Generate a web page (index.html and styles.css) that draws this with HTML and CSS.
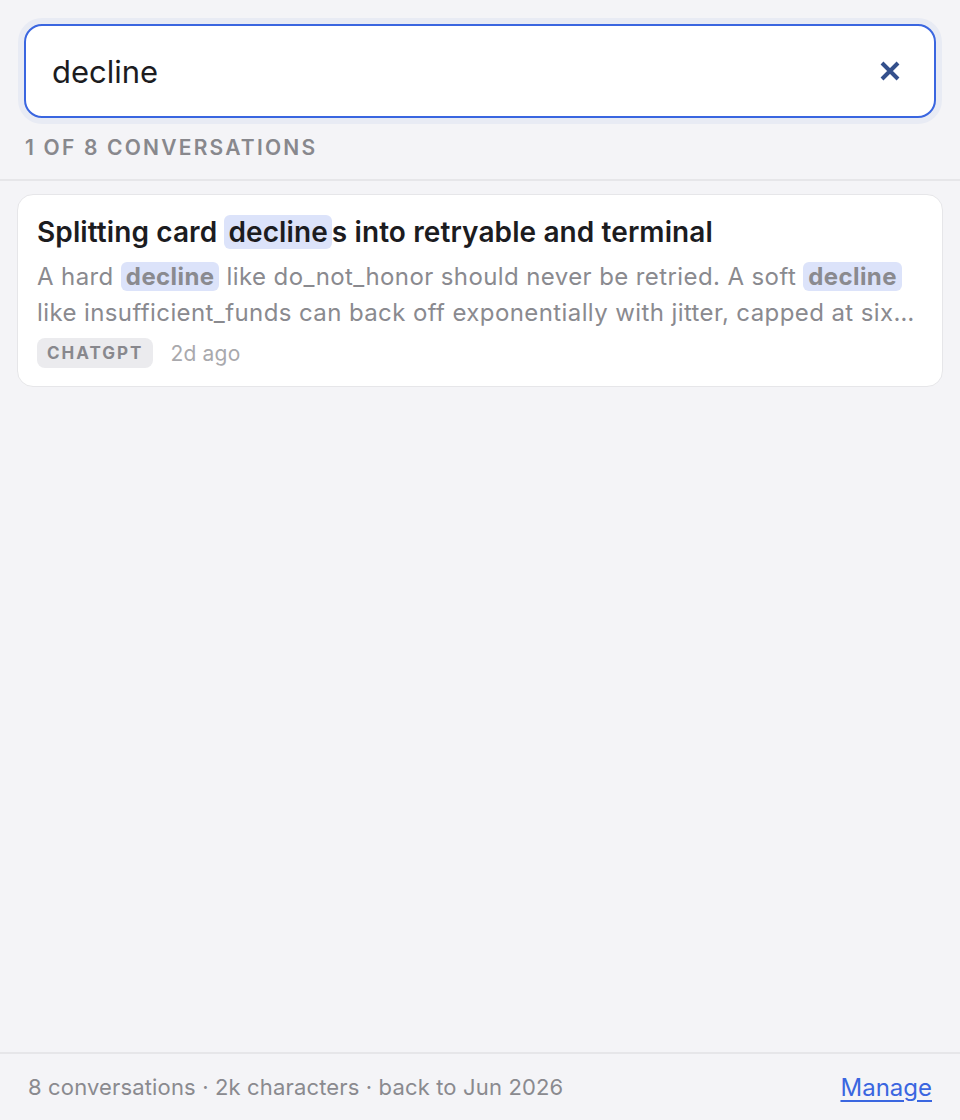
FILE: index.html
```html
<!DOCTYPE html>
<html lang="en">
<head>
<meta charset="utf-8">
<title>Search conversations</title>
<link rel="stylesheet" href="styles.css">
</head>
<body>
<div class="app">
  <header class="header">
    <div class="search">
      <span class="search-text">decline</span>
      <button class="clear" aria-label="Clear search">
        <svg width="22" height="22" viewBox="0 0 22 22"><path d="M3 3 L19 19 M19 3 L3 19" stroke="#34508c" stroke-width="4" stroke-linecap="butt" fill="none"/></svg>
      </button>
    </div>
    <div class="count">1 of 8 conversations</div>
  </header>
  <main class="list">
    <article class="card">
      <h2 class="title">Splitting card <mark class="hl">decline</mark>s into retryable and terminal</h2>
      <p class="snippet">A hard <mark class="hl hl-b">decline</mark> like do_not_honor should never be retried. A soft <mark class="hl hl-b">decline</mark> like insufficient_funds can back off exponentially with jitter, capped at six…</p>
      <div class="meta"><span class="tag">ChatGPT</span><span class="time">2d ago</span></div>
    </article>
  </main>
  <footer class="footer">
    <span class="stats">8 conversations · 2k characters · back to Jun 2026</span>
    <a class="manage" href="#">Manage</a>
  </footer>
</div>
</body>
</html>
```
FILE: styles.css
```css
* { box-sizing: border-box; }
html, body { margin: 0; padding: 0; }
body {
  background: #f4f4f7;
  font-family: Inter, "Noto Sans", "Liberation Sans", sans-serif;
  color: #1c1c1f;
}
.app {
  height: 1120px;
  display: flex;
  flex-direction: column;
}
.header {
  padding: 24px 24px 0;
  border-bottom: 2px solid #e6e6e9;
}
.search {
  height: 94px;
  background: #fff;
  border: 2px solid #3a66e0;
  border-radius: 18px;
  box-shadow: 0 0 0 6px #e8ebf4;
  display: flex;
  align-items: center;
  padding: 0 33px 0 26px;
}
.search-text {
  flex: 1;
  font-size: 31px;
  color: #1c1c1f;
}
.clear {
  border: 0;
  background: none;
  padding: 0;
  display: flex;
  cursor: pointer;
}
.count {
  margin-top: 17px;
  padding: 0 1px 18px;
  font-size: 21px;
  font-weight: 600;
  letter-spacing: 2.2px;
  text-transform: uppercase;
  color: #88888d;
  line-height: 26px;
}
.list {
  flex: 1;
  padding: 13px 17px;
}
.card {
  background: #fff;
  border: 1.5px solid #e6e6e9;
  border-radius: 16px;
  padding: 18px 19px 18px;
}
.title {
  margin: 0;
  font-size: 28px;
  font-weight: 600;
  letter-spacing: 0.1px;
  line-height: 38px;
  color: #1c1c1f;
}
.hl {
  background: #dce3fa;
  color: inherit;
  border-radius: 6px;
  padding: 0 4px;
}
.hl-b { font-weight: 700; padding: 0 5px; }
.snippet {
  margin: 8px 0 0;
  font-size: 24px;
  letter-spacing: 0.4px;
  line-height: 36px;
  color: #8a8a8f;
}
.meta {
  margin-top: 7px;
  display: flex;
  align-items: center;
  gap: 17px;
}
.tag {
  background: #ebebee;
  border-radius: 8px;
  padding: 0 10px;
  height: 30px;
  line-height: 30px;
  font-size: 17px;
  font-weight: 700;
  letter-spacing: 2px;
  text-transform: uppercase;
  color: #88888d;
}
.time {
  font-size: 21px;
  letter-spacing: 0.2px;
  color: #a9a9ad;
}
.footer {
  height: 68px;
  border-top: 2px solid #e6e6e9;
  display: flex;
  align-items: center;
  justify-content: space-between;
  padding: 0 28px;
}
.stats {
  font-size: 22px;
  letter-spacing: 0.15px;
  color: #8a8a8f;
}
.manage {
  font-size: 24px;
  color: #3a66e0;
  text-decoration: underline;
  text-decoration-thickness: 2px;
  text-underline-offset: 4px;
}
```
